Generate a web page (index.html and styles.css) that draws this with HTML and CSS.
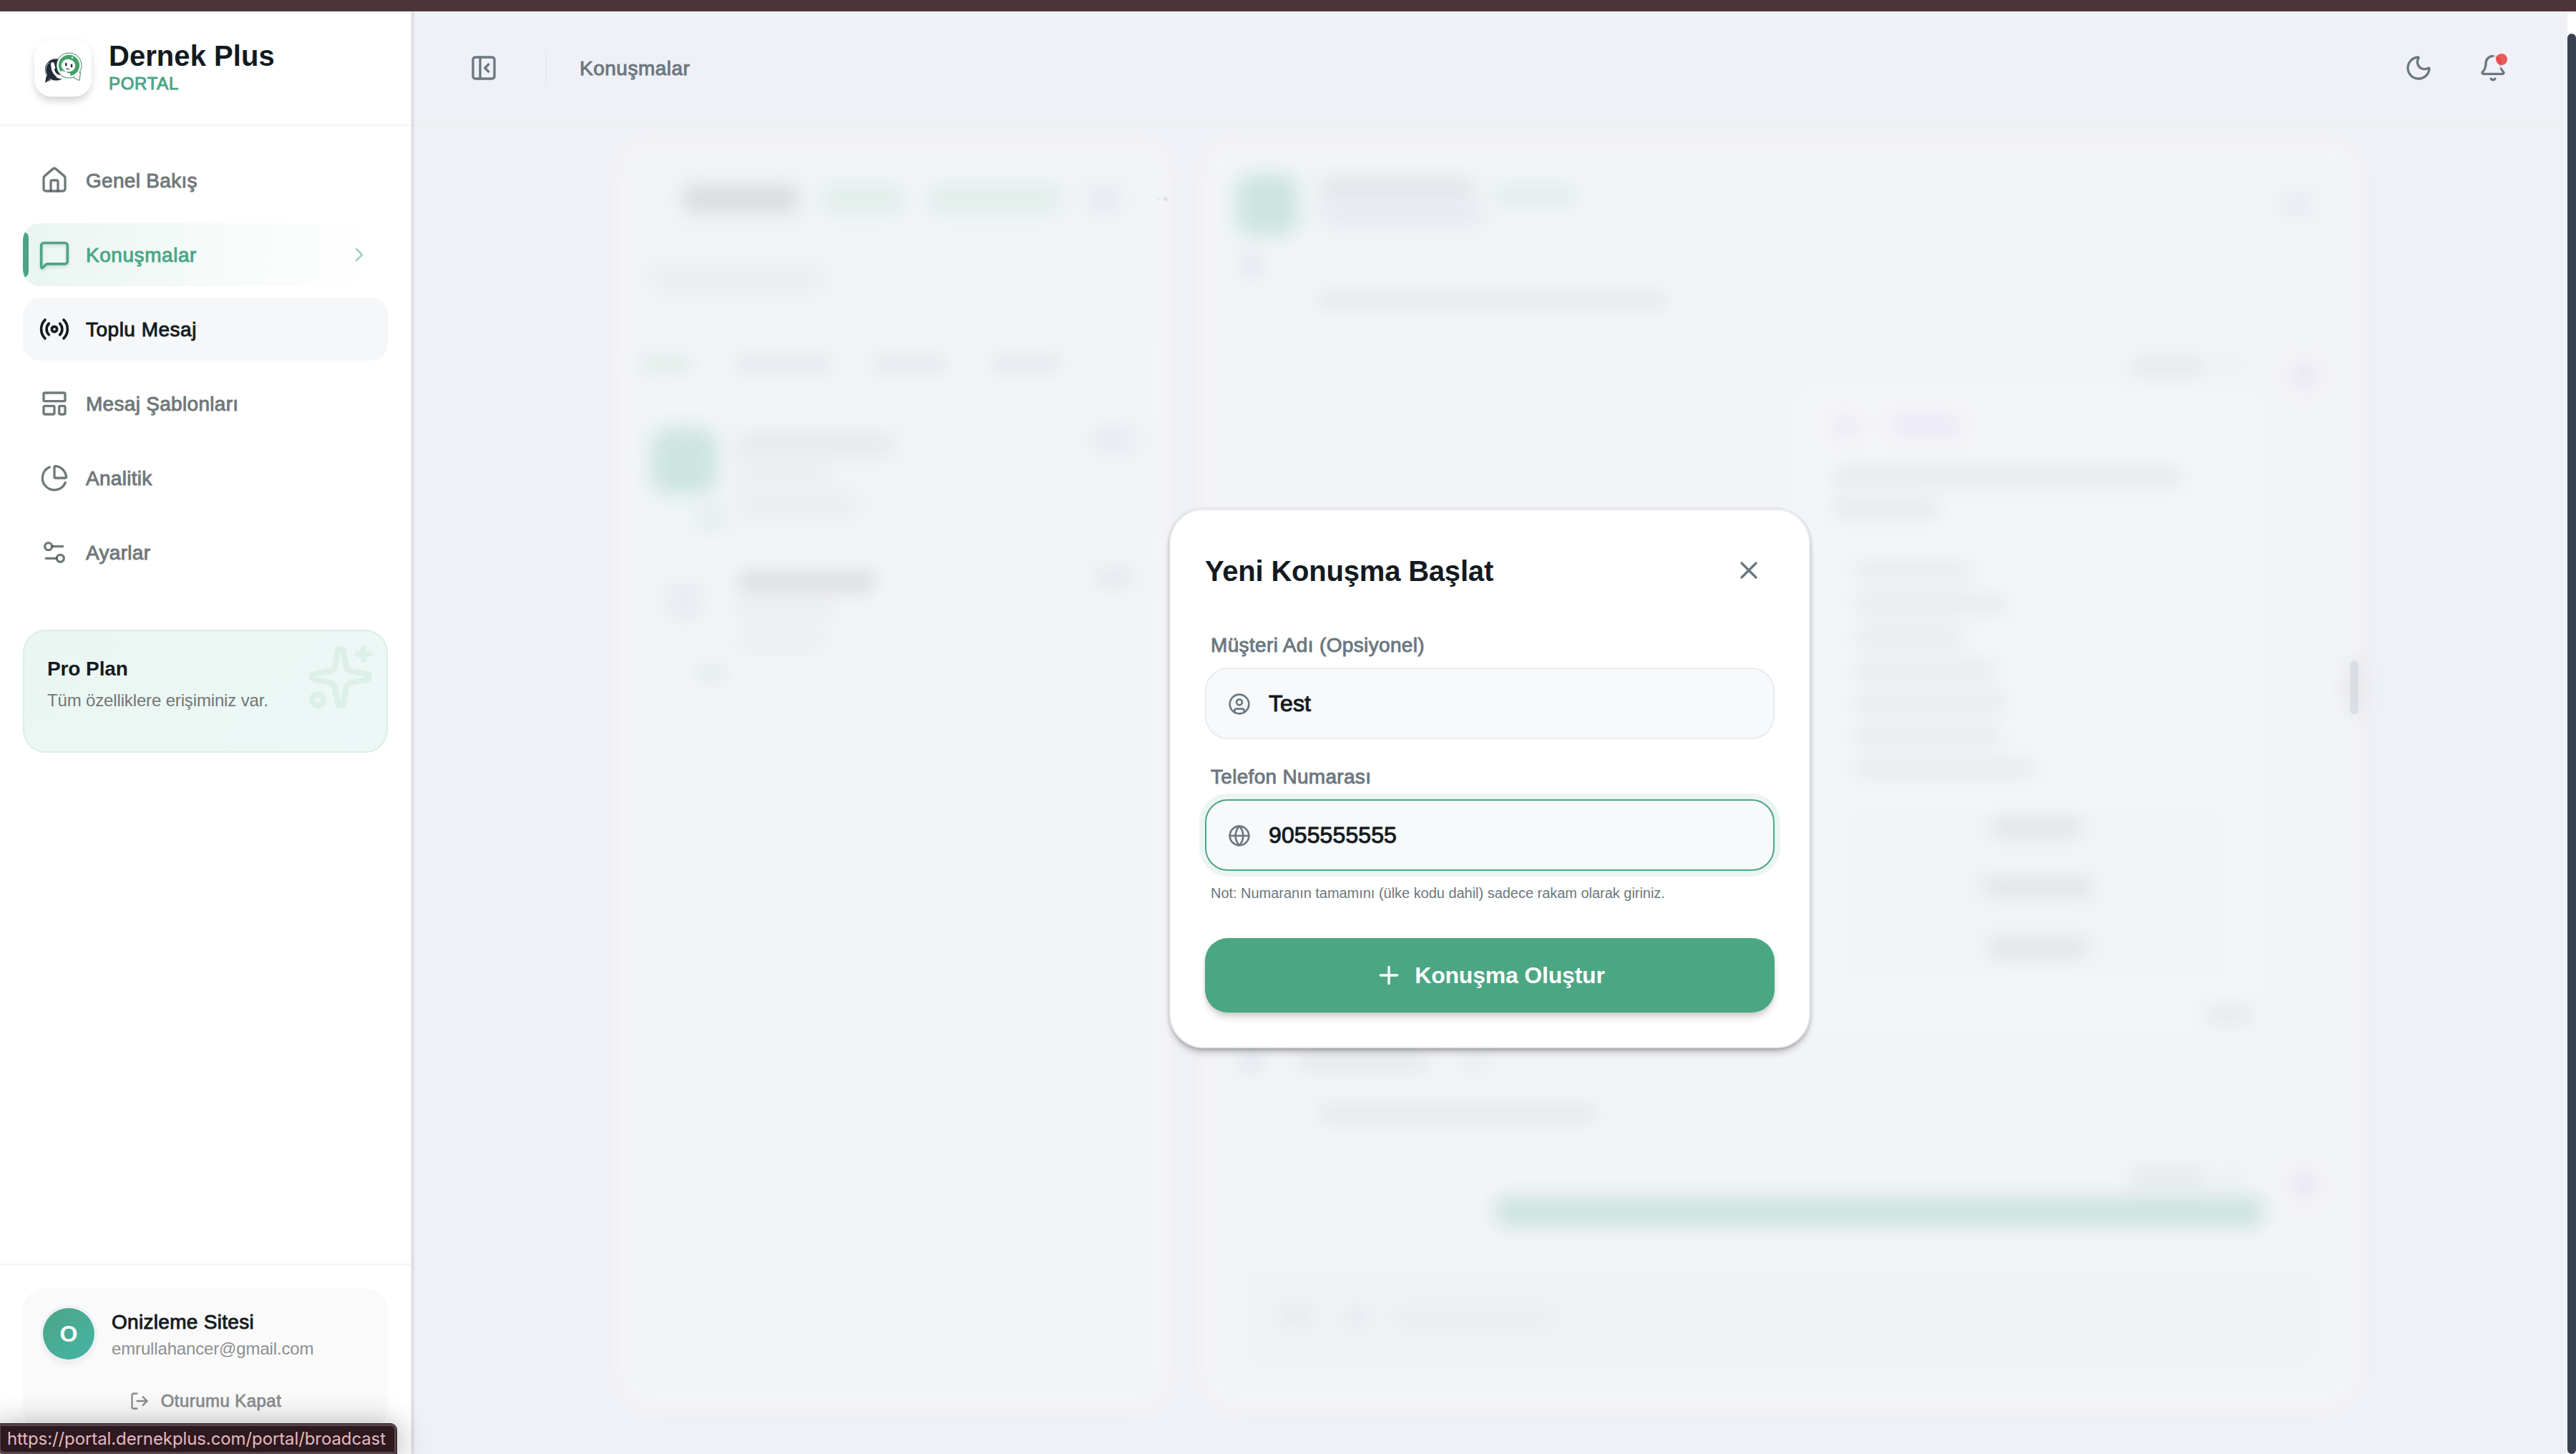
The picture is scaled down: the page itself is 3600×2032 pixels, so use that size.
FILE: index.html
```html
<!DOCTYPE html>
<html lang="tr">
<head>
<meta charset="utf-8">
<title>Dernek Plus Portal</title>
<link rel="stylesheet" href="styles.css">
</head>
<body>
<div class="window-edge"></div>
<div class="app">
  <aside class="sidebar">
    <div class="brand">
      <div class="brand-tile">
        <svg width="80" height="80" viewBox="0 0 80 80" fill="none">
          <path d="M17 50l-2 10.500 8-3z" fill="#222c38"/>
          <circle cx="30" cy="42.500" r="15.200" fill="#222c38"/>
          <path d="M17.800 50.500a14.500 14.500 0 0 1 2.500-18M18 59l5.500-2.600c5 2.200 10.500 2.400 15.500 0" stroke="#dfe4e6" stroke-width=".9"/>
          <path d="M25.500 35c-1.500 7 3 15.500 10.500 18" stroke="#fff" stroke-width="3.400" stroke-linecap="round"/>
          <path d="M25.500 34.500l1.200 5M33.500 51.800l4.800 1" stroke="#fff" stroke-width="5" stroke-linecap="round"/>
          <path d="M64.500 46l-1.500 11.500-8.500-4z" fill="#fff" stroke="#3f8069" stroke-width="1"/>
          <circle cx="48.500" cy="36.500" r="17.500" fill="#fff" stroke="#3f8069" stroke-width="1"/>
          <path d="M63 45.500l-.8 10-6.500-3z" fill="#fff"/>
          <circle cx="48.500" cy="36.400" r="14.600" fill="#45a067"/>
          <ellipse cx="47.500" cy="36.500" rx="9.800" ry="8.800" fill="#fff" transform="rotate(12 47.500 36.500)"/>
          <path d="M36.500 45.500l2.800-2 2.200 2 2.500-1.700 3 3.700 3-.5.500 4.500h-8.500l-4-3z" fill="#fff"/>
          <ellipse cx="44.300" cy="35" rx="1.400" ry="2.600" fill="#27323d"/>
          <ellipse cx="52" cy="36.800" rx="1.400" ry="2.600" fill="#27323d"/>
          <path d="M44.500 40.300c1.500 1.400 3.200 1.500 4.500.9" stroke="#27323d" stroke-width="1.100"/>
          <circle cx="53" cy="25.500" r="1.300" fill="#e4f3ea"/>
        </svg>
      </div>
      <div class="brand-text">
        <div class="brand-name">Dernek Plus</div>
        <div class="brand-sub">PORTAL</div>
      </div>
    </div>

    <nav class="nav">
      <a class="nav-item">
        <svg class="icon40" viewBox="0 0 24 24"><path d="M15 21v-8a1 1 0 0 0-1-1h-4a1 1 0 0 0-1 1v8"/><path d="M3 10a2 2 0 0 1 .709-1.528l7-5.999a2 2 0 0 1 2.582 0l7 5.999A2 2 0 0 1 21 10v9a2 2 0 0 1-2 2H5a2 2 0 0 1-2-2z"/></svg>
        <span>Genel Bakış</span>
      </a>
      <a class="nav-item active">
        <svg class="icon40 grown glow" viewBox="0 0 24 24"><path d="M22 17a2 2 0 0 1-2 2H6.828a2 2 0 0 0-1.414.586l-2.202 2.202A.71.71 0 0 1 2 21.286V5a2 2 0 0 1 2-2h16a2 2 0 0 1 2 2z"/></svg>
        <span>Konuşmalar</span>
        <svg class="chevron" viewBox="0 0 24 24"><path d="m9 18 6-6-6-6"/></svg>
      </a>
      <a class="nav-item hovered">
        <svg class="icon40 grown" viewBox="0 0 24 24"><path d="M4.900 19.100C1 15.200 1 8.800 4.900 4.900"/><path d="M7.800 16.200c-2.300-2.300-2.300-6.100 0-8.500"/><circle cx="12" cy="12" r="2"/><path d="M16.200 7.800c2.300 2.300 2.300 6.100 0 8.500"/><path d="M19.100 4.900C23 8.800 23 15.100 19.100 19"/></svg>
        <span>Toplu Mesaj</span>
      </a>
      <a class="nav-item">
        <svg class="icon40" viewBox="0 0 24 24"><rect width="18" height="7" x="3" y="3" rx="1"/><rect width="9" height="7" x="3" y="14" rx="1"/><rect width="5" height="7" x="16" y="14" rx="1"/></svg>
        <span>Mesaj Şablonları</span>
      </a>
      <a class="nav-item">
        <svg class="icon40" viewBox="0 0 24 24"><path d="M21 12c.552 0 1.005-.449.950-.998a10 10 0 0 0-8.953-8.951c-.550-.055-.998.398-.998.950v8a1 1 0 0 0 1 1z"/><path d="M21.210 15.890A10 10 0 1 1 8 2.830"/></svg>
        <span>Analitik</span>
      </a>
      <a class="nav-item">
        <svg class="icon40" viewBox="0 0 24 24"><path d="M14 17H5"/><path d="M19 7h-9"/><circle cx="17" cy="17" r="3"/><circle cx="7" cy="7" r="3"/></svg>
        <span>Ayarlar</span>
      </a>
    </nav>

    <div class="plan">
      <div class="plan-title">Pro Plan</div>
      <div class="plan-text">Tüm özelliklere erişiminiz var.</div>
      <svg class="plan-art" viewBox="0 0 24 24"><path d="M11.017 2.814a1 1 0 0 1 1.966 0l1.051 5.558a2 2 0 0 0 1.594 1.594l5.558 1.051a1 1 0 0 1 0 1.966l-5.558 1.051a2 2 0 0 0-1.594 1.594l-1.051 5.558a1 1 0 0 1-1.966 0l-1.051-5.558a2 2 0 0 0-1.594-1.594l-5.558-1.051a1 1 0 0 1 0-1.966l5.558-1.051a2 2 0 0 0 1.594-1.594z"/><path d="M20 2v4"/><path d="M22 4h-4"/><circle cx="4" cy="20" r="2"/></svg>
    </div>

    <div class="account-wrap">
      <div class="account">
        <div class="account-row">
          <div class="avatar">O</div>
          <div>
            <div class="account-name">Onizleme Sitesi</div>
            <div class="account-mail">emrullahancer@gmail.com</div>
          </div>
        </div>
        <div class="logout">
          <svg class="icon28" viewBox="0 0 24 24"><path d="m16 17 5-5-5-5"/><path d="M21 12H9"/><path d="M9 21H5a2 2 0 0 1-2-2V5a2 2 0 0 1 2-2h4"/></svg>
          <span>Oturumu Kapat</span>
        </div>
      </div>
    </div>
  </aside>

  <main class="main">
    <header class="topbar">
      <svg class="icon40" viewBox="0 0 24 24"><rect width="18" height="18" x="3" y="3" rx="2"/><path d="M9 3v18"/><path d="m16 15-3-3 3-3"/></svg>
      <div class="topbar-sep"></div>
      <span class="crumb">Konuşmalar</span>
      <div class="topbar-actions">
        <svg class="icon40" viewBox="0 0 24 24"><path d="M20.985 12.486a9 9 0 1 1-9.473-9.472c.405-.022.617.460.402.803a6 6 0 0 0 8.268 8.268c.344-.215.825-.004.803.401"/></svg>
        <div class="bell">
          <svg class="icon40" viewBox="0 0 24 24"><path d="M10.268 21a2 2 0 0 0 3.464 0"/><path d="M3.262 15.326A1 1 0 0 0 4 17h16a1 1 0 0 0 .740-1.673C19.410 13.956 18 12.499 18 8A6 6 0 0 0 6 8c0 4.499-1.411 5.956-2.738 7.326"/></svg>
          <i class="bell-dot"></i>
        </div>
      </div>
    </header>

    <div class="board">
      <section class="panel list-panel">
        <div class="row head tinted"><b class="bar strong w160"></b><b class="bar green faint w110"></b><b class="bar green w180"></b><b class="bar cool w40"></b></div>
        <div class="row search"><b class="bar cool faint w240"></b></div>
        <div class="row tabs"><b class="bar green w75"></b><b class="bar cool w135"></b><b class="bar cool w105"></b><b class="bar cool w100"></b></div>
        <div class="chat tinted">
          <b class="face teal"></b>
          <div class="lines"><b class="bar w220"></b><b class="bar faint w130"></b><b class="bar faint w170"></b></div>
          <b class="bar cool w60"></b>
        </div>
        <div class="row mark"><b class="bar green w40"></b></div>
        <div class="chat">
          <b class="face grey"></b>
          <div class="lines"><b class="bar strong w195"></b><b class="bar cool faint w135"></b><b class="bar faint w120"></b></div>
          <b class="bar cool w60"></b>
        </div>
        <div class="row mark second"><b class="bar green w40"></b></div>
      </section>
      <section class="panel talk-panel">
        <div class="row talk-head tinted"><b class="face teal"></b>
          <div class="lines"><b class="bar mid w215"></b><b class="bar cool w225"></b></div>
          <b class="bar green pill w110"></b><b class="bar cool more w40"></b></div>
        <div class="row r40"><b class="dot"></b></div>
        <div class="row r60 indent"><b class="bar w490"></b></div>
        <div class="row r60 outgoing"><b class="bar w110"></b><b class="bar cool faint w25"></b><b class="dot violet"></b></div>
        <div class="bubble">
          <div class="row tag"><b class="bar violet w35"></b><b class="bar violet w100"></b></div>
          <div class="row r50"><b class="bar w490"></b></div>
          <div class="row r40"><b class="bar w150"></b></div>
          <div class="menu">
            <b class="bar w165"></b><b class="bar w215"></b><b class="bar w155"></b><b class="bar w200"></b><b class="bar w215"></b><b class="bar w205"></b><b class="bar w255"></b>
          </div>
          <div class="choices"><b class="bar mid w125"></b><b class="bar mid w155"></b><b class="bar mid w140"></b></div>
          <div class="row stamp"><b class="bar w70"></b></div>
        </div>
        <div class="row r40 incoming"><b class="dot"></b><b class="bar w185"></b><b class="bar cool faint w40"></b></div>
        <div class="row reply indent"><b class="bar w390"></b></div>
        <div class="row r60 outgoing late"><b class="bar w110"></b><b class="bar cool faint w25"></b><b class="dot violet"></b></div>
        <div class="sent"></div>
        <div class="row composer"><b class="bar w45"></b><b class="bar cool w35"></b><b class="bar cool faint w230"></b></div>
      </section>
      <i class="grip"></i>
      <i class="specks"></i>
    </div>

    <div class="modal">
      <div class="modal-head">
        <h2>Yeni Konuşma Başlat</h2>
        <div class="close"><svg class="icon40" viewBox="0 0 24 24"><path d="M18 6 6 18"/><path d="m6 6 12 12"/></svg></div>
      </div>
      <label class="label">Müşteri Adı (Opsiyonel)</label>
      <div class="field">
        <svg class="icon32" viewBox="0 0 24 24"><circle cx="12" cy="12" r="10"/><circle cx="12" cy="10" r="3"/><path d="M7 20.662V19a2 2 0 0 1 2-2h6a2 2 0 0 1 2 2v1.662"/></svg>
        <span>Test</span>
      </div>
      <label class="label second">Telefon Numarası</label>
      <div class="field focused">
        <svg class="icon32" viewBox="0 0 24 24"><circle cx="12" cy="12" r="10"/><path d="M12 2a14.500 14.500 0 0 0 0 20 14.500 14.500 0 0 0 0-20"/><path d="M2 12h20"/></svg>
        <span>9055555555</span>
      </div>
      <p class="note">Not: Numaranın tamamını (ülke kodu dahil) sadece rakam olarak giriniz.</p>
      <div class="submit">
        <svg class="icon40" viewBox="0 0 24 24"><path d="M5 12h14"/><path d="M12 5v14"/></svg>
        <span>Konuşma Oluştur</span>
      </div>
    </div>
  </main>
  <div class="scrollbar"><div class="thumb"></div></div>
</div>
<div class="status">https://portal.dernekplus.com/portal/broadcast</div>
</body>
</html>
```
FILE: styles.css
```css
* { box-sizing: border-box; }
body {
  margin: 0; width: 3600px; height: 2032px; overflow: hidden; position: relative;
  display: flex; flex-direction: column; background: #fff;
  font-family: "Liberation Sans", Arial, sans-serif; color: #131a20;
}
svg { display: block; flex: none; }
.window-edge { height: 16px; flex: none; background: #4c3438; border-bottom: 1px solid #554446; }
.app { flex: 1; display: flex; min-height: 0; }

.icon40, .icon32, .icon28, .chevron, .plan-art {
  fill: none; stroke: currentColor; stroke-width: 2; stroke-linecap: round; stroke-linejoin: round;
}
.icon40 { width: 40px; height: 40px; }
.icon32 { width: 32px; height: 32px; }
.icon28 { width: 28px; height: 28px; }

/* Sidebar */
.sidebar {
  width: 576px; flex: none; display: flex; flex-direction: column; position: relative; z-index: 2;
  background: #fff; border-right: 2px solid #e6e8ec; box-shadow: 1px 0 4px rgba(40, 45, 60, .2);
}
.brand { height: 160px; flex: none; display: flex; gap: 24px; padding: 39px 0 0 48px; border-bottom: 2px solid #f3f4f5; }
.brand-tile { width: 80px; height: 80px; border-radius: 24px; background: #fff; box-shadow: 0 8px 12px -2px rgba(0,0,0,.14), 0 2px 14px rgba(0,0,0,.05); }
.brand-name { font-size: 40px; font-weight: 700; line-height: 44px; margin-top: 1px; letter-spacing: .05px; }
.brand-sub { font-size: 24px; line-height: 28px; margin-top: 3px; color: #4ba585; letter-spacing: .7px; -webkit-text-stroke: 1px currentColor; }
.nav { padding: 32px 32px 0; display: flex; flex-direction: column; gap: 16px; }
.nav-item {
  height: 88px; padding: 0 24px; display: flex; align-items: center; gap: 24px; position: relative;
  border-radius: 24px; overflow: hidden; font-size: 28px; color: #6f7778; letter-spacing: .3px; -webkit-text-stroke: .9px currentColor;
}
.nav-item span { padding-top: 1px; }
.nav-item svg { color: rgba(82, 92, 93, .82); -webkit-text-stroke: 0; }
.nav-item.active { color: #4ba585; letter-spacing: .55px; background: linear-gradient(90deg, #eaf5f1, #fff 94%); }
.nav-item.active svg { color: #4ba585; }
.nav-item.active::before { content: ""; position: absolute; left: 0; top: 12px; width: 8px; height: 64px; border-radius: 0 8px 8px 0; background: #4ba585; }
.nav-item.hovered { background: #f6f7f9; color: #131a20; letter-spacing: .5px; }
.nav-item.hovered svg { color: #131a20; }
.grown { transform: scale(1.1); }
.glow { filter: drop-shadow(0 2px 2px rgba(0, 0, 0, .12)); }
.chevron { width: 32px; height: 32px; margin-left: auto; opacity: .5; }
.plan {
  margin: 64px 32px 0; height: 172px; padding: 28px 32px 0; position: relative; border: 2px solid #dbeee6;
  border-radius: 32px; background: linear-gradient(135deg, #ebf5f1, #edf7f6);
}
.plan-title { font-size: 28px; line-height: 50px; font-weight: 700; letter-spacing: -.1px; }
.plan-text { font-size: 24px; line-height: 36px; margin-top: 1px; color: #6f7778; letter-spacing: -.15px; }
.plan-art { position: absolute; right: 16px; top: 16px; width: 96px; height: 96px; color: #dcefe8; }
.account-wrap { margin-top: auto; height: 266px; flex: none; border-top: 2px solid #f3f4f5; padding: 32px 32px 0; }
.account { height: 200px; border-radius: 32px; background: #fafafa; padding: 28px; }
.account-row { display: flex; gap: 24px; }
.avatar {
  width: 72px; height: 72px; border-radius: 50%; display: flex; align-items: center; justify-content: center;
  color: #fff; font-size: 32px; font-weight: 700; background: linear-gradient(135deg, #4ca585, #46b5a6);
  box-shadow: 0 0 0 4px #f0f1f6, 0 6px 10px rgba(0, 0, 0, .08);
}
.account-name { font-size: 28px; line-height: 38px; margin-top: 1px; letter-spacing: .3px; -webkit-text-stroke: .9px currentColor; }
.account-mail { font-size: 24px; line-height: 35px; color: #8b8f91; letter-spacing: -.15px; }
.logout { display: flex; align-items: center; justify-content: center; gap: 16px; margin-top: 40px; height: 32px; font-size: 24px; letter-spacing: .45px; color: #878d8f; -webkit-text-stroke: .8px currentColor; }
.logout svg { -webkit-text-stroke: 0; }

/* Main column */
.main { flex: 1; position: relative; background: #f0f1f6; min-width: 0; }
.topbar { height: 160px; display: flex; align-items: center; padding: 0 84px 0 80px; border-bottom: 2px solid #edeff2; color: #6b7780; }
.topbar-sep { width: 2px; height: 48px; margin: 0 48px 0 66px; background: #e9eaef; }
.crumb { font-size: 28px; margin-left: -2px; padding-top: 2px; letter-spacing: .5px; -webkit-text-stroke: 1px currentColor; }
.topbar-actions { margin-left: auto; display: flex; gap: 64px; }
.bell { position: relative; }
.bell-dot { position: absolute; right: 0; top: 0; width: 16px; height: 16px; border-radius: 50%; background: #ee4444; opacity: .88; box-shadow: 0 0 0 4px rgba(240, 241, 246, .9); }
.scrollbar { width: 12px; flex: none; padding-top: 31px; background: #fff; }
.thumb { height: 100%; border-radius: 6px; background: #394150; }

/* Frosted conversation area behind the dialog */
.board { position: relative; height: 1856px; padding: 22px 292px 0 290px; display: flex; gap: 46px; }
.panel { height: 1770px; background: #f3f4f7; border-radius: 48px; filter: blur(9px); }
.list-panel { width: 770px; flex: none; padding: 32px 24px 0; }
.talk-panel { flex: 1; padding: 32px 24px 0; }
.row { display: flex; align-items: center; }
.tinted { background: #f0f4f7; }
.bar { display: block; height: 26px; border-radius: 13px; background: #e6e8ea; filter: blur(9px); flex: none; }
.bar.strong { background: #d9dbde; }
.bar.mid { background: #e0e3e7; }
.bar.cool { background: #e6e8ee; }
.bar.faint { background: #eaecf0; }
.bar.green { background: #e1ede9; }
.bar.violet { background: #ebe7f6; }
.face { display: block; width: 92px; height: 92px; border-radius: 26px; filter: blur(9px); flex: none; }
.face.teal { background: #cce5df; }
.face.grey { background: #ebecf2; }
.dot { display: block; width: 38px; height: 38px; border-radius: 50%; background: #e7e9f0; filter: blur(9px); flex: none; }
.dot.violet { background: #e9e7f4; margin-left: 52px; }
.head { height: 96px; gap: 35px; padding-left: 65px; }
.head .bar { height: 36px; }
.head .w180 { margin-left: 5px; }
.head .w40 { margin-left: 8px; }
.search { height: 146px; padding: 0 0 20px 20px; background: #f1f3f6; }
.tabs { height: 72px; gap: 58px; padding-left: 4px; margin-bottom: 40px; }
.chat { height: 170px; display: flex; padding: 14px 24px 0 20px; gap: 28px; }
.lines { display: flex; flex-direction: column; gap: 16px; flex: 1; padding-top: 10px; }
.chat > .bar { margin-top: 4px; }
.chat .face.grey { width: 60px; height: 56px; margin: 22px 16px 0; }
.mark { height: 30px; padding-left: 84px; margin: -45px 0 37px; }
.second { margin-top: -20px; }

.talk-head { height: 112px; padding: 0 42px 0 22px; gap: 32px; }
.talk-head .face { width: 86px; height: 86px; }
.talk-head .lines { flex: none; gap: 10px; padding: 0; margin-top: -8px; }
.pill { margin: 0 0 26px -12px; }
.more { margin-left: auto; }
.r40 { height: 40px; }
.r50 { height: 50px; }
.r60 { height: 60px; }
.talk-panel > .r40 { padding-left: 24px; margin-top: 8px; }
.indent { padding-left: 135px; }
.outgoing { justify-content: flex-end; padding-right: 32px; gap: 20px; margin-top: 32px; }
.outgoing .dot { margin-top: 24px; }
.bubble { width: 655px; height: 900px; margin: 2px 112px 20px auto; padding: 29px 32px 0 56px; border-radius: 36px; background: #f4f5f8; }
.tag { height: 44px; gap: 45px; margin-bottom: 24px; }
.menu { display: flex; flex-direction: column; gap: 20px; padding: 54px 0 0 30px; }
.menu .bar { height: 26px; background: #e8eaec; }
.choices { height: 240px; margin: 42px 14px 0 18px; padding: 14px 0 32px; display: flex; flex-direction: column; align-items: center; justify-content: space-between; background: #f1f4f7; border-radius: 24px; }
.stamp { height: 50px; margin-right: -22px; justify-content: flex-end; padding-top: 48px; }
.incoming { gap: 44px; }
.reply { height: 60px; margin-top: 22px; }
.late { margin-top: 28px; }
.sent { width: 1075px; height: 42px; margin: -2px 108px 54px auto; border-radius: 14px; background: #cbe4dd; filter: blur(10px); }
.composer { height: 150px; margin: 0 26px; padding: 0 0 6px 56px; gap: 46px; border-radius: 30px; background: #f0f3f6; }
.composer .faint { margin-left: -16px; }
.w25 { width: 25px; } .w35 { width: 35px; } .w40 { width: 40px; } .w45 { width: 45px; } .w60 { width: 60px; } .w70 { width: 70px; } .w75 { width: 75px; }
.w100 { width: 100px; } .w105 { width: 105px; } .w110 { width: 110px; } .w120 { width: 120px; } .w125 { width: 125px; } .w130 { width: 130px; }
.w135 { width: 135px; } .w140 { width: 140px; } .w150 { width: 150px; } .w155 { width: 155px; } .w160 { width: 160px; } .w165 { width: 165px; }
.w170 { width: 170px; } .w180 { width: 180px; } .w185 { width: 185px; } .w195 { width: 195px; } .w200 { width: 200px; } .w205 { width: 205px; }
.w215 { width: 215px; } .w220 { width: 220px; } .w225 { width: 225px; } .w230 { width: 230px; } .w240 { width: 240px; } .w255 { width: 255px; }
.w390 { width: 390px; } .w490 { width: 490px; }
.grip { position: absolute; left: 2708px; top: 747px; width: 12px; height: 75px; border-radius: 6px; background: #dcdee3; box-shadow: 0 0 26px 3px rgba(205, 208, 216, .4); }
.specks { position: absolute; left: 1050px; top: 99px; width: 6px; height: 6px; border-radius: 50%; background: #dfe1e5; box-shadow: -10px 0 0 -1px #e8eaec; }

/* Dialog */
.modal {
  position: absolute; left: 1058px; top: 695px; width: 896px; height: 754px; padding: 48px;
  background: #fff; border: 2px solid #e8ebee; border-radius: 48px;
  box-shadow: 0 8px 12px -4px rgba(0, 0, 0, .3), 0 1px 5px rgba(0, 0, 0, .2);
}
.modal-head { height: 72px; display: flex; align-items: center; justify-content: space-between; margin-bottom: 48px; }
h2 { margin: 0; padding-top: 1px; font-size: 40px; line-height: 48px; font-weight: 700; letter-spacing: -.2px; }
.close { width: 72px; height: 72px; display: flex; align-items: center; justify-content: center; color: #6b7780; }
.label { display: block; height: 40px; line-height: 41px; margin-bottom: 12px; padding-left: 8px; font-size: 28px; letter-spacing: .35px; color: #6b7780; -webkit-text-stroke: .9px currentColor; }
.label.second { margin-top: 32px; letter-spacing: .3px; }
.field { height: 100px; padding: 1px 30px 0; display: flex; align-items: center; gap: 25px; background: #f7f9fb; border: 2px solid #e9edf0; border-radius: 32px; font-size: 32px; letter-spacing: .1px; -webkit-text-stroke: 1px currentColor; }
.field svg { color: #6b7780; -webkit-text-stroke: 0; }
.field.focused { border-color: #4ba684; box-shadow: 0 0 0 8px #ecf5f1; }
.note { margin: 15px 0 0; padding-left: 8px; height: 32px; line-height: 32px; font-size: 20px; letter-spacing: -.03px; color: #6b7780; }
.submit { margin-top: 47px; height: 104px; display: flex; align-items: center; justify-content: center; gap: 16px; border-radius: 32px; background: #4ba684; color: #fff; font-size: 32px; font-weight: 700; letter-spacing: -.2px; box-shadow: 0 8px 12px -2px rgba(0, 0, 0, .18), 0 2px 5px rgba(0, 0, 0, .08); }
.submit span { padding-top: 1px; }

/* Link preview of the browser */
.status {
  position: absolute; left: -2px; bottom: 0; z-index: 5; width: 556px; height: 42px; padding-left: 9px;
  border: 3px solid #574349; outline: 1px solid #241a1c; border-radius: 2px 8px 0 8px; background: #2d191e;
  font-family: Inter, sans-serif; font-size: 24px; line-height: 35px; letter-spacing: -.1px; color: #e3b9c2; white-space: nowrap;
  box-shadow: 0 4px 40px 4px rgba(0, 0, 0, .3);
}
```
